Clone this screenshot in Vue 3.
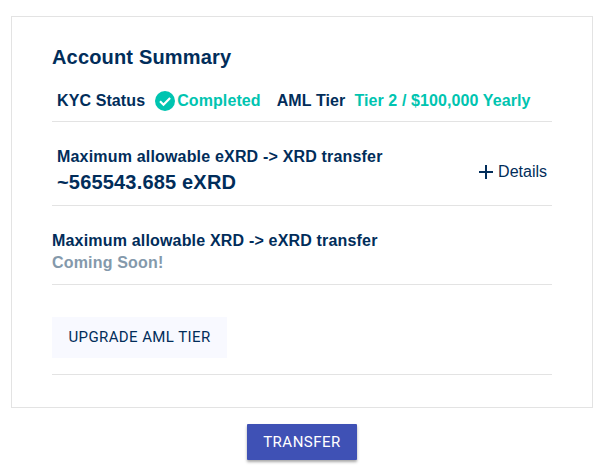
<template>
  <div class="page">
    <div class="card">
      <h2 class="title">Account Summary</h2>

      <div class="status-row">
        <span class="label">KYC Status</span>
        <svg class="check" viewBox="0 0 20 20" width="20" height="20">
          <circle cx="10" cy="10" r="10" fill="#00c4b0" />
          <path d="M5 10.2l3.5 3.5 6.6-6.8" fill="none" stroke="#fff" stroke-width="2.2" />
        </svg>
        <span class="value completed">Completed</span>
        <span class="label aml">AML Tier</span>
        <span class="value tier">{{ tier }}</span>
      </div>

      <div class="limit-row">
        <div>
          <div class="limit-title first">Maximum allowable eXRD -&gt; XRD transfer</div>
          <div class="amount">~{{ amount }} eXRD</div>
        </div>
        <div class="details">
          <svg viewBox="0 0 16 16" width="16" height="16">
            <path d="M8 1v14M1 8h14" fill="none" stroke="#012d5a" stroke-width="2" />
          </svg>
          <span>Details</span>
        </div>
      </div>

      <div class="soon-row">
        <div class="limit-title">Maximum allowable XRD -&gt; eXRD transfer</div>
        <div class="soon">Coming Soon!</div>
      </div>

      <div class="upgrade-row">
        <button class="upgrade">Upgrade AML Tier</button>
      </div>
    </div>

    <div class="actions">
      <button class="transfer">Transfer</button>
    </div>
  </div>
</template>

<script setup>
const tier = 'Tier 2 / $100,000 Yearly'
const amount = '565543.685'
</script>

<style>
html,
body {
  background: #fff;
}
</style>

<style scoped>
.page {
  width: 605px;
  height: 469px;
  box-sizing: border-box;
  padding: 16px 12px 0 11px;
  font-family: "Liberation Sans", Arial, sans-serif;
  color: #012d5a;
  overflow: hidden;
}

.card {
  box-sizing: border-box;
  height: 392px;
  padding: 0 40px;
  border: 1px solid #e3e3e3;
}

.title {
  margin: 29px 0 0;
  font-size: 20px;
  line-height: 23px;
  font-weight: 700;
  letter-spacing: 0.17px;
}

.status-row {
  display: flex;
  align-items: center;
  height: 45px;
  padding: 3px 0 0 5px;
  margin-top: 8px;
  box-sizing: border-box;
  border-bottom: 1px solid #e3e3e3;
  font-size: 16px;
  font-weight: 700;
}

.label {
  letter-spacing: 0.1px;
}

.check {
  margin-left: 10px;
}

.value {
  color: #00c4b0;
  letter-spacing: 0.1px;
}

.completed {
  margin-left: 2px;
}

.aml {
  margin-left: 16px;
}

.tier {
  margin-left: 9px;
}

.limit-row {
  display: flex;
  justify-content: space-between;
  align-items: flex-end;
  height: 84px;
  padding: 0 5px 9px 5px;
  box-sizing: border-box;
  border-bottom: 1px solid #e3e3e3;
}

.limit-title {
  font-size: 16px;
  line-height: 20px;
  font-weight: 700;
  letter-spacing: 0.18px;
}

.limit-title.first {
  margin-bottom: 1px;
}

.amount {
  font-size: 20px;
  line-height: 28px;
  font-weight: 700;
  letter-spacing: 0.18px;
}

.details {
  display: flex;
  align-items: center;
  gap: 4px;
  font-size: 16px;
  margin-bottom: 15px;
}

.soon-row {
  height: 79px;
  padding-top: 25px;
  box-sizing: border-box;
  border-bottom: 1px solid #e3e3e3;
}

.soon {
  font-size: 16px;
  line-height: 24px;
  font-weight: 700;
  color: #8499ab;
  letter-spacing: 0.18px;
}

.upgrade-row {
  height: 90px;
  padding-top: 32px;
  box-sizing: border-box;
  border-bottom: 1px solid #e3e3e3;
}

.upgrade {
  width: 175px;
  height: 41px;
  padding: 0 0 2px;
  border: 0;
  background: #f8f9ff;
  color: #012d5a;
  font-family: Roboto, sans-serif;
  font-size: 15px;
  letter-spacing: 0.4px;
  text-transform: uppercase;
}

.actions {
  display: flex;
  justify-content: center;
  margin-top: 16px;
}

.transfer {
  width: 110px;
  height: 36px;
  padding: 0;
  border: 0;
  border-radius: 1px;
  background: #3f51b5;
  color: #fff;
  font-family: Roboto, sans-serif;
  font-size: 15px;
  letter-spacing: 0.5px;
  text-transform: uppercase;
  box-shadow: 0 2px 3px rgba(0, 0, 0, 0.35);
}
</style>
